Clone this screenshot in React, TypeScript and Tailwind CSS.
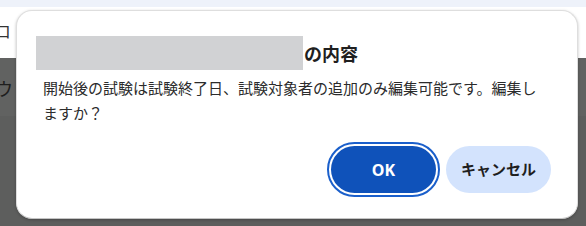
import React from "react";

export default function App() {
  const jp = { fontFamily: '"Noto Sans CJK JP", "Noto Sans", sans-serif' };
  return (
    <div className="relative w-[586px] h-[226px] overflow-hidden bg-white" style={jp}>
      {/* page behind */}
      <div className="flex flex-col h-full">
        <div className="h-[7px] bg-[#eef2fa]" />
        <div className="h-[51px] bg-white relative">
          <span className="absolute left-[-6px] top-[15px] text-[17px] leading-none text-[#333]">ロ</span>
        </div>
        <div className="h-[58px] bg-[#616261] relative">
          <span className="absolute left-[-5px] top-[21px] text-[18px] leading-none text-[#1e1e1e]">ウ</span>
        </div>
        <div className="flex-1 bg-[#5d5e5d]" />
      </div>

      {/* dialog */}
      <div className="absolute left-[16px] top-[10px] w-[562px] h-[209px] rounded-[16px] bg-white border border-[#dedede] border-b-[#c4c4c4] shadow-[0_1px_3px_rgba(0,0,0,0.25)] px-[26px] pt-[25px] pb-[25px] flex flex-col">
        <div className="flex items-center h-[34px] -ml-[7px]">
          <div className="w-[267px] h-[34px] bg-[#d1d2d4]" />
          <span className="text-[18px] font-bold text-[#1f1f1f] leading-none ml-[1px]">の内容</span>
        </div>
        <p className="mt-[5px] text-[15px] leading-[25px] text-[#2b2b2b] pr-[4px]">
          開始後の試験は試験終了日、試験対象者の追加のみ編集可能です。編集しますか？
        </p>
        <div className="flex-1" />
        <div className="flex justify-end items-center gap-[10px]">
          <button className="w-[105px] h-[47px] rounded-full bg-[#0f52ba] text-white text-[16px] font-bold outline-2 outline-[#1a5fcb] outline-offset-2 flex items-center justify-center" style={{ fontFamily: '"Noto Sans", "Noto Sans CJK JP", sans-serif' }}>
            OK
          </button>
          <button className="w-[105px] h-[47px] rounded-full bg-[#d3e3fd] text-[#1f1f1f] text-[15px] font-bold flex items-center justify-center">
            キャンセル
          </button>
        </div>
      </div>
    </div>
  );
}
